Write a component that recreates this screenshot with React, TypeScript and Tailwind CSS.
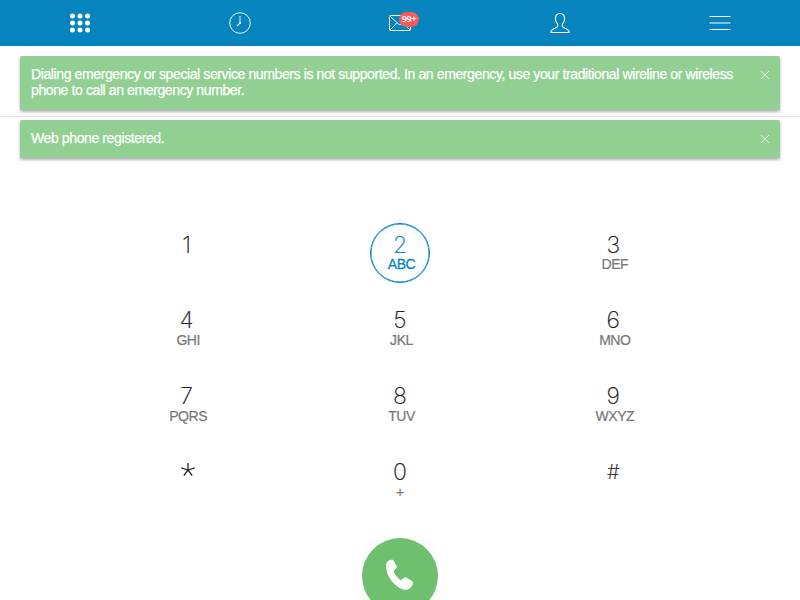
import React from "react";

type Key = { digit: string; letters: string; active?: boolean };

const keys: Key[] = [
  { digit: "1", letters: "" },
  { digit: "2", letters: "ABC", active: true },
  { digit: "3", letters: "DEF" },
  { digit: "4", letters: "GHI" },
  { digit: "5", letters: "JKL" },
  { digit: "6", letters: "MNO" },
  { digit: "7", letters: "PQRS" },
  { digit: "8", letters: "TUV" },
  { digit: "9", letters: "WXYZ" },
  { digit: "*", letters: "" },
  { digit: "0", letters: "+" },
  { digit: "#", letters: "" },
];

function DialpadIcon() {
  return (
    <svg width="22" height="22" viewBox="0 0 22 22" fill="white">
      {[4, 11, 18].map((y) =>
        [3.5, 11, 18.5].map((x) => <circle key={`${x}-${y}`} cx={x} cy={y} r="2.5" />)
      )}
    </svg>
  );
}

function ClockIcon() {
  return (
    <svg width="24" height="24" viewBox="0 0 24 24" fill="none" stroke="white">
      <circle cx="12" cy="12" r="10.3" strokeWidth="0.9" />
      <path d="M12 5v7" strokeWidth="0.9" />
      <path d="M12 12l-3 3" strokeWidth="1.1" />
      <circle cx="12" cy="12" r="1.1" fill="white" stroke="none" />
    </svg>
  );
}

function MailIcon() {
  return (
    <svg width="24" height="18" viewBox="0 0 24 18" fill="none" stroke="white" strokeWidth="0.9">
      <rect x="1.500" y="1.500" width="21" height="15" rx="0.8" />
      <path d="M2 2l8.500 8q1.500 1.200 3 0L22 2M2 16l7-7.300M22 16l-7-7.300" />
    </svg>
  );
}

function UserIcon() {
  return (
    <svg width="22" height="24" viewBox="0 0 22 24" fill="none" stroke="white" strokeWidth="1.1" strokeLinejoin="round">
      <path d="M11 2.500C8 2.500 6.300 4.600 6.400 7.700c.1 2.400.9 4.300 2.300 5.500.5 1.500.1 2.500-1 3.200C5.500 17.600 1.900 18.200 1.700 21.500h18.600c-.2-3.300-3.800-3.900-6-5.100-1.100-.7-1.500-1.700-1-3.200 1.400-1.200 2.200-3.100 2.300-5.500C15.700 4.600 14 2.500 11 2.500z" />
    </svg>
  );
}

function MenuIcon() {
  return (
    <svg width="22" height="16" viewBox="0 0 22 16" fill="white">
      <path d="M0.500 1h21v1h-21zM.5 14h21v1h-21z" />
      <path d="M.5 7h21v2h-21z" opacity="0.5" />
    </svg>
  );
}

function Alert({ children, className }: { children: React.ReactNode; className: string }) {
  return (
    <div className={`mx-5 flex justify-between rounded-[2px] bg-[#91cf93] pt-[11px] pr-[10px] pl-[11px] text-[14px] leading-4 text-white shadow-[0_2px_3px_rgba(0,0,0,0.3)] ${className}`}>
      <p className="-mt-px tracking-[-0.39px] whitespace-nowrap [-webkit-text-stroke:0.25px_white]">{children}</p>
      <svg className="mt-[3px] shrink-0" width="10" height="10" viewBox="0 0 10 10" stroke="white" strokeWidth="0.7">
        <path d="M1 1l8 8M9 1l-8 8" />
      </svg>
    </div>
  );
}

function DialKey({ digit, letters, active }: Key) {
  return (
    <button
      className={`flex h-[60px] w-[60px] flex-col items-center rounded-full border pt-[9px] ${
        active ? "border-[#0684bd] text-[#0684bd] shadow-[inset_0_0_0_0.5px_#0684bd]" : "border-transparent text-[#222]"
      }`}
    >
      {digit === "*" ? (
        <svg className="mt-[2px] ml-[3px]" width="16" height="16" viewBox="0 0 16 16" stroke="#222" strokeWidth="1.3">
          <path d="M8 8V1M8 8L1.300 5.800M8 8l6.700-2.200M8 8l-4.200 5.700M8 8l4.200 5.700" />
        </svg>
      ) : (
        <span
          className={`font-['Inter',sans-serif] leading-6 font-extralight ${
            digit === "#" ? "text-[20px]" : "text-[23px]"
          } ${active ? "[-webkit-text-stroke:0.2px_#0684bd]" : "[-webkit-text-stroke:0.2px_#222]"}`}
        >
          {digit}
        </span>
      )}
      <span
        className={`text-[14px] leading-4 tracking-[-0.45px] ${letters === "+" ? "" : "ml-[3px]"} ${
          active ? "-mt-px [-webkit-text-stroke:0.3px_#0684bd]" : "text-[#777] [-webkit-text-stroke:0.2px_#777]"
        } ${letters === "DEF" ? "-mt-px" : ""}`}
      >
        {letters}
      </span>
    </button>
  );
}

export default function App() {
  return (
    <div className="flex h-[600px] w-[800px] flex-col overflow-hidden bg-white font-['Liberation_Sans',Arial,sans-serif]">
      <nav className="grid h-[46px] shrink-0 grid-cols-5 place-items-center bg-[#0684bd]">
        <DialpadIcon />
        <ClockIcon />
        <div className="relative">
          <MailIcon />
          <span className="absolute -top-[2px] left-[11px] flex h-[15px] w-5 items-center justify-center rounded-full bg-[#f95b5c] pb-px font-['Noto_Sans',sans-serif] text-[9px] font-semibold tracking-[-0.3px] text-white">
            99+
          </span>
        </div>
        <UserIcon />
        <MenuIcon />
      </nav>
      <div className="h-[71px] shrink-0 border-b border-[#e2e2e2] pt-[10px]">
        <Alert className="h-[54px]">
          Dialing emergency or special service numbers is not supported. In an emergency, use your traditional wireline or wireless
          <br />
          phone to call an emergency number.
        </Alert>
      </div>
      <div className="shrink-0 pt-[3px]">
        <Alert className="h-[38px]">Web phone registered.</Alert>
      </div>
      <main className="mx-20 mt-[64.500px] grid shrink-0 grid-cols-3 justify-items-center gap-y-[15.700px]">
        {keys.map((k) => (
          <DialKey key={k.digit} {...k} />
        ))}
      </main>
      <button className="mx-auto mt-[28px] flex h-[76px] w-[76px] shrink-0 items-center justify-center rounded-full bg-[#6ec06e]">
        <svg className="-mt-px" width="28" height="32" viewBox="0 0 28 32" fill="white">
          <path d="M1.500 2.600C2.700 1.300 4.600.7 6.300.7c.8 0 1.200.5 1.600 1.200l2.800 5c.5 1 .3 1.600-.4 2.300L8.100 11.200c-.6.7-.6 1.300-.2 2.100 1.400 2.800 3.400 5.200 5.900 7.200.8.6 1.500.6 2.200 0l2-1.800c.7-.6 1.400-.7 2.200-.2l6 3.700c.9.6 1.100 1.300.7 2.200-1 3.400-3.400 6.100-6.900 6.300C11.500 31 .2 18.500.1 7.400 0 5.400.5 3.800 1.500 2.600z" />
        </svg>
      </button>
    </div>
  );
}
